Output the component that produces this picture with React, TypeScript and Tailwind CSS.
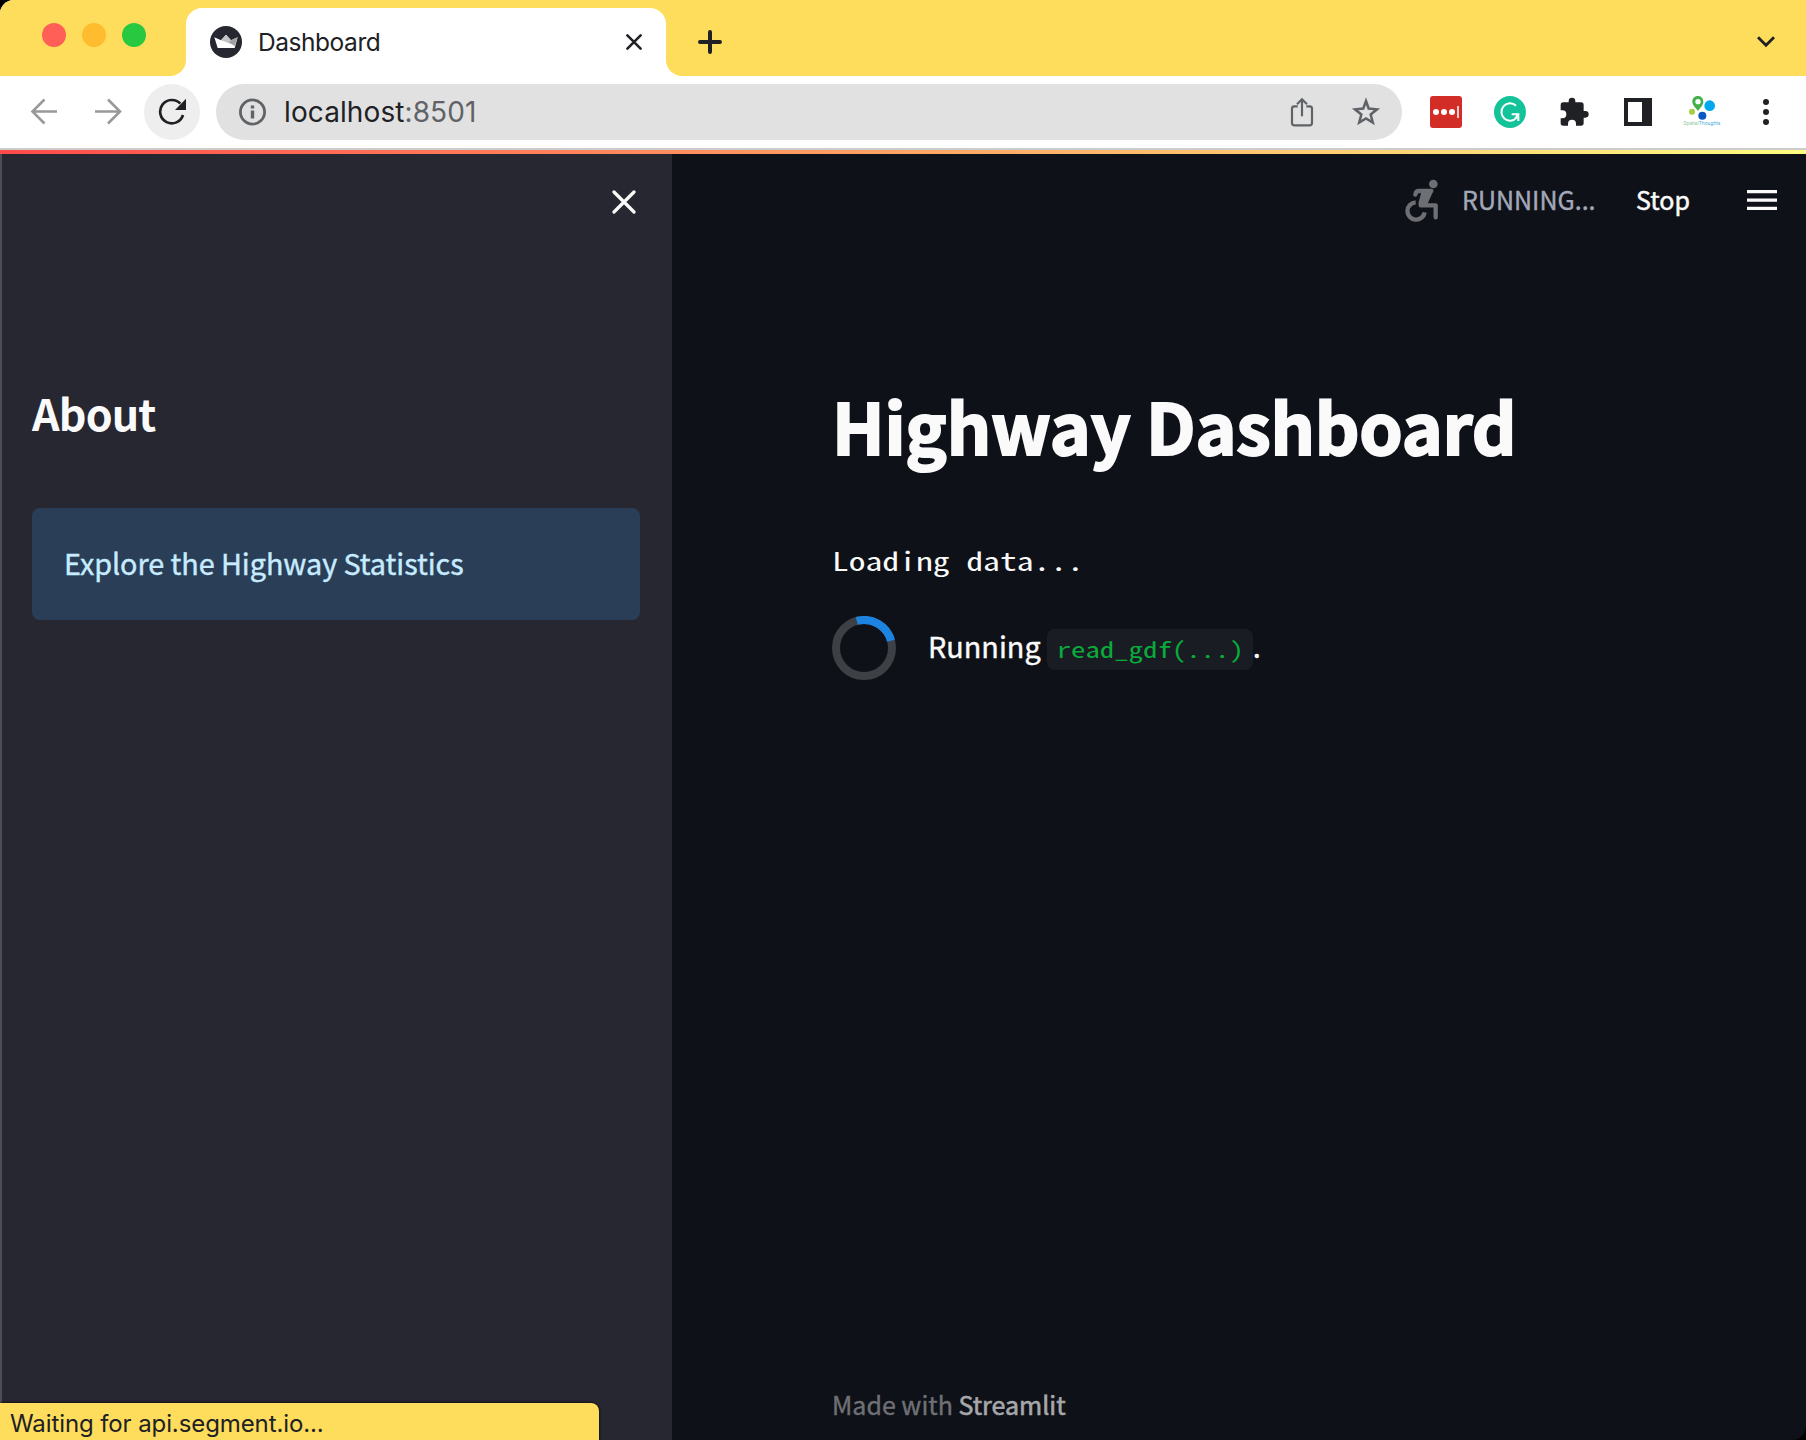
import React from "react";

const sans = "font-['Noto_Sans_CJK_SC',sans-serif]";
const mono = "font-['Noto_Sans_Mono_CJK_SC','Liberation_Mono',monospace]";

function TabStrip() {
  return (
    <div className="flex h-[76px] shrink-0 bg-white">
      <div className="flex w-[186px] gap-4 rounded-br-2xl bg-[#ffdd5c] pt-[23px] pl-[42px]">
        <span className="size-6 rounded-full bg-[#ff5f57]" />
        <span className="size-6 rounded-full bg-[#febc2e]" />
        <span className="size-6 rounded-full bg-[#28c840]" />
      </div>
      <div className="w-[480px] bg-[#ffdd5c] pt-2">
        <div className="flex h-[68px] items-center rounded-t-2xl bg-white pr-6 pl-6">
          <svg className="size-8" viewBox="630 78 96 96">
            <circle cx="678" cy="126" r="48" fill="#262730" />
            <path d="M643 112L663 121L678 104L693 121L713 112L704 144H653Z" fill="#fff" />
            <path d="M678 104L693 121L704 136L663 121Z" fill="#c4c4c8" />
            <path d="M713 112L693 121L686 127L704 138Z" fill="#a0a0a6" />
          </svg>
          <span className="ml-4 pb-px text-[24.500px] leading-8 tracking-[-0.45px] text-[#202124]">Dashboard</span>
          <svg className="ml-auto size-4" viewBox="0 0 16 16" fill="none" stroke="#202124" strokeWidth="2.6" strokeLinecap="round">
            <path d="M1.4 1.4L14.6 14.6M14.6 1.4L1.4 14.6" />
          </svg>
        </div>
      </div>
      <div className="flex flex-1 items-center justify-between rounded-bl-2xl bg-[#ffdd5c] pt-2 pr-[31px] pl-8">
        <svg className="size-6" viewBox="0 0 24 24" fill="none" stroke="#202124" strokeWidth="4" strokeLinecap="round">
          <path d="M12 2V22M2 12H22" />
        </svg>
        <svg className="h-3 w-[18px]" viewBox="0 0 18 12" fill="none" stroke="#202124" strokeWidth="2.8">
          <path d="M1 1.2L9 9.2L17 1.2" />
        </svg>
      </div>
    </div>
  );
}

function Toolbar() {
  return (
    <div className="flex h-[72px] shrink-0 items-center bg-white">
      <svg className="ml-[30px] h-7 w-7" viewBox="0 0 28 28" fill="none" stroke="#999" strokeWidth="2.6">
        <path d="M27 13.5H3M14.500 1.500L2.500 13.500L14.500 25.500" />
      </svg>
      <svg className="ml-9 h-7 w-7" viewBox="0 0 28 28" fill="none" stroke="#999" strokeWidth="2.600">
        <path d="M1 13.500H26M14 1.500L26 13.500L14 25.500" />
      </svg>
      <div className="ml-[22px] flex size-14 items-center justify-center rounded-full bg-[#eee]">
        <svg className="size-7" viewBox="474 294 84 84">
          <path d="M549 345A35 35 0 1 1 541 311" fill="none" stroke="#202124" strokeWidth="8" />
          <path d="M558 296V330H525Z" fill="#202124" />
        </svg>
      </div>
      <div className="ml-4 flex h-14 w-[1186px] items-center rounded-full bg-[#e1e1e1] pl-[23px]">
        <svg className="size-7" viewBox="0 0 28 28" fill="none" stroke="#5f6368" strokeWidth="2.8">
          <circle cx="13.500" cy="14" r="12.100" />
          <path strokeWidth="3.400" d="M13.500 12.500V20.500M13.500 7.500V10.500" />
        </svg>
        <span className="ml-[17px] text-[28px] leading-8 tracking-[0.1px] text-[#202124]">
          localhost<span className="text-[#5f6368]">:8501</span>
        </span>
        <svg className="ml-auto h-[30px] w-6" viewBox="90 82 72 90" fill="none" stroke="#5f6368" strokeWidth="6.500">
          <path d="M113 110H103Q96 110 96 117V160Q96 167 103 167H149Q156 167 156 160V117Q156 110 149 110H139M126 140V90M111 104L126 89L141 104" />
        </svg>
        <svg className="mr-[21px] ml-[37px] h-[30px] w-[30px]" viewBox="273 80 90 90" fill="none" stroke="#5f6368" strokeWidth="7.500">
          <path d="M318 92L326 114.500L351 117L332 132.500L338.500 157L318 144.500L297.500 157L304 132.500L285 117L310 114.500Z" />
        </svg>
      </div>
      <svg className="ml-7 size-8" viewBox="510 78 96 96">
        <rect x="510" y="78" width="96" height="96" rx="9" fill="#d32d27" />
        <g fill="#fff">
          <circle cx="528" cy="126" r="9" />
          <circle cx="552" cy="126" r="9" />
          <circle cx="576" cy="126" r="9" />
          <rect x="591" y="108" width="6" height="36" opacity=".75" />
        </g>
      </svg>
      <svg className="ml-8 size-8" viewBox="702 78 96 96" fill="none" stroke="#fff" strokeWidth="6">
        <circle cx="750" cy="126" r="48" fill="#15c39a" stroke="none" />
        <path d="M768 107A26 26 0 1 0 770 143M755 133H775V153M773 135L765 147" />
      </svg>
      <svg className="ml-[34px] size-[30px]" viewBox="60 290 90 90" fill="#202124">
        <path d="M70 306H86V302A10 10 0 0 1 106 302V306H123Q131 306 131 314V332H136A10 10 0 0 1 136 352H131V368Q131 376 123 376H108V370A12 12 0 0 0 84 370V376H70Q62 376 62 368V354H67A12 12 0 0 0 67 330H62V314Q62 306 70 306Z" />
      </svg>
      <svg className="ml-[34px] size-7" viewBox="0 0 28 28">
        <path d="M0 0H28V28H0Z" fill="#202124" />
        <path d="M4 4H18V24H4Z" fill="#fff" />
      </svg>
      <svg className="ml-[30px] h-9 w-10" viewBox="426 285 120 108">
        <path d="M474 291C463 291 457 299 457 308C457 319 467 325 474 336C481 325 490 319 490 308C490 299 484 291 474 291Z" fill="#43b049" />
        <circle cx="474" cy="308" r="8" fill="#fff" />
        <circle cx="509" cy="320" r="16" fill="#00a8f0" />
        <circle cx="456" cy="338" r="9" fill="#a4cf3e" />
        <circle cx="487" cy="350" r="12" fill="#0b57c4" />
        <text x="430" y="378" fontSize="16" fontFamily="Inter" fill="#8cc79b" textLength="111" lengthAdjust="spacingAndGlyphs">
          Spatial<tspan fill="#4aa9d6">Thoughts</tspan>
        </text>
      </svg>
      <svg className="ml-10 h-7 w-2" viewBox="0 0 8 28" fill="#202124">
        <circle cx="4" cy="4" r="3" />
        <circle cx="4" cy="14" r="3" />
        <circle cx="4" cy="24" r="3" />
      </svg>
    </div>
  );
}

function Sidebar() {
  return (
    <aside className={`${sans} relative flex w-[672px] shrink-0 flex-col border-l-2 border-[#4c4d55] bg-[#262730]`}>
      <div className="flex h-24 items-center justify-end pr-9">
        <svg className="size-6" viewBox="0 0 24 24" fill="none" stroke="#fafafa" strokeWidth="3.200" strokeLinecap="round">
          <path d="M2 2L22 22M22 2L2 22" />
        </svg>
      </div>
      <h2 className="mt-[133px] ml-[30px] h-[61px] text-[43px] leading-[58px] font-bold tracking-[-0.8px] text-[#fafafa]">About</h2>
      <div className="mt-16 mr-8 ml-[30px] flex h-28 items-center rounded-lg bg-[#2a3e57] pb-0.5 pl-8 text-[28.800px] leading-[52px] tracking-[-0.07px] text-[#c7ebff] [-webkit-text-stroke:0.4px]">
        Explore the Highway Statistics
      </div>
      <div className="absolute bottom-0 -left-0.5 flex h-[37px] w-[599px] items-center rounded-tr-lg bg-[#ffdd5c] pt-1 pl-2.5 font-[Inter,sans-serif] text-[24px] tracking-[-0.1px] text-[#202124] shadow-[0_0_3px_#000]">
        Waiting for api.segment.io...
      </div>
    </aside>
  );
}

function RunningIcon() {
  return (
    <svg className="mt-0.5 h-[46px] w-9" viewBox="72 84 108 138" fill="none" stroke="#6e6f74" strokeWidth="13" strokeLinecap="round" strokeLinejoin="round">
      <circle cx="160" cy="102" r="13" fill="#6e6f74" stroke="none" />
      <path d="M107 157A26 26 0 1 0 134 187" strokeLinecap="butt" />
      <path d="M106 134Q108 123 116 123H154" />
      <path d="M130 124H154L138 160H120Z" fill="#6e6f74" strokeWidth="10" />
      <path d="M122 166H167V202" />
    </svg>
  );
}

function Main() {
  return (
    <main className={`${sans} flex flex-1 flex-col bg-[#0e1117] text-[#fafafa] [-webkit-text-stroke:0.4px]`}>
      <header className="flex h-24 items-center justify-end pr-[29px] pb-1">
        <RunningIcon />
        <span className="ml-[22px] w-[134px] pb-[3px] text-[25px] leading-10 whitespace-nowrap text-[#a3a8b8]">RUNNING...</span>
        <span className="ml-10 w-[55px] pb-[3px] text-[25px] leading-10 [-webkit-text-stroke:0.5px]">Stop</span>
        <svg className="ml-14 h-5 w-[30px]" viewBox="0 0 30 20" fill="#fafafa">
          <path d="M0 0H30V3.300H0ZM0 8.500H30V11.800H0ZM0 16.700H30V20H0Z" />
        </svg>
      </header>
      <h1 className="mt-[125px] ml-40 h-[105px] text-[69.500px] leading-[100px] font-bold tracking-[-0.2px] whitespace-nowrap [-webkit-text-stroke:2px]">
        Highway Dashboard
      </h1>
      <pre className={`${mono} mt-[62px] ml-40 h-10 origin-[0_30px] -translate-y-1 scale-y-[0.78] text-[33.600px] leading-10 [-webkit-text-stroke:0]`}>Loading data...</pre>
      <div className="mt-[34px] ml-40 flex h-16 items-center">
        <svg className="size-16" viewBox="0 0 64 64" fill="none" strokeWidth="8">
          <circle cx="32" cy="32" r="28" stroke="#3d4045" />
          <path d="M24.750 4.950A28 28 0 0 1 59.050 24.750" stroke="#1c83e1" />
        </svg>
        <span className="ml-8 pb-[5px] text-[28.800px] leading-[52px]">Running</span>
        <code className={`${mono} mt-0.5 ml-1.5 flex h-[41px] w-[206px] items-center rounded-lg bg-[#1a1c24] pb-px pl-2.5 text-[28.800px] text-[#09ab3b] [-webkit-text-stroke:0]`}>
          <span className="scale-y-[0.78]">read_gdf(...)</span>
        </code>
        <span className="pb-[5px] text-[28.800px] leading-[52px]">.</span>
      </div>
      <footer className="mt-auto mb-4 ml-40 text-[25px] leading-10 text-[#6e7074]">
        Made with <span className="text-[#a6a7aa] [-webkit-text-stroke:0.6px]">Streamlit</span>
      </footer>
    </main>
  );
}

export default function App() {
  return (
    <div className="flex h-[1440px] w-[1806px] flex-col overflow-hidden bg-black font-[Inter,sans-serif]">
      <div className="flex flex-1 flex-col overflow-hidden rounded-tl-[14px] rounded-br-[14px]">
        <TabStrip />
        <Toolbar />
        <div className="h-0.5 shrink-0 bg-[#ccc]" />
        <div className="h-1 shrink-0 bg-linear-to-r/srgb from-[#ff4b4b] to-[#fffd80]" />
        <div className="flex min-h-0 flex-1">
          <Sidebar />
          <Main />
        </div>
      </div>
    </div>
  );
}
